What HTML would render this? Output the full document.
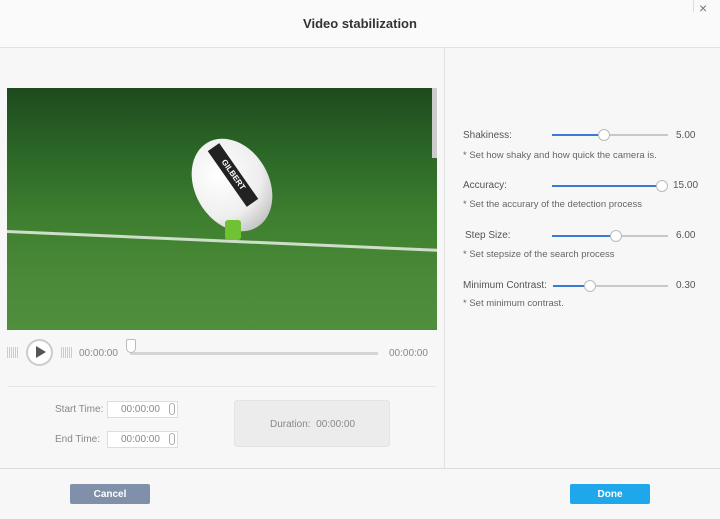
<!DOCTYPE html><html><head><style>
*{margin:0;padding:0;box-sizing:border-box}
body{width:720px;height:519px;background:#f7f7f7;font-family:"Liberation Sans",sans-serif;position:relative;overflow:hidden;color:#555}
.a{position:absolute}
.t{font-size:10px;color:#555}
.s{font-size:9.5px;color:#666}
.tr{position:absolute;height:2px;background:#c8c8c8;width:116px;left:552px}
.fl{position:absolute;height:2px;background:#3a7bd5;left:552px}
.kn{position:absolute;width:12px;height:12px;border-radius:50%;background:#fff;border:1px solid #bbb}
</style></head><body>
<div class="a" style="left:0;top:0;width:720px;height:48px;background:#fafafa;border-bottom:1px solid #e2e2e2"></div>
<div class="a" style="left:0;top:16px;width:720px;text-align:center;font-size:13px;font-weight:bold;color:#333">Video stabilization</div>
<div class="a" style="left:699px;top:0;font-size:14px;color:#777">×</div>
<div class="a" style="left:693px;top:0;width:1px;height:12px;background:#ddd"></div>
<div class="a" style="left:444px;top:48px;width:1px;height:420px;background:#e2e2e2"></div>
<div class="a" style="left:0;top:468px;width:720px;height:1px;background:#ddd"></div>
<div class="a" style="left:7px;top:88px;width:430px;height:242px;overflow:hidden;background:linear-gradient(180deg,#1e4a1e 0%,#2d6a28 30%,#3f8030 55%,#4a8a38 80%,#4f8e3c 100%)">
<div class="a" style="left:0;top:142px;width:440px;height:3px;background:#dfe8dc;transform:rotate(2.5deg);transform-origin:0 0;opacity:.9"></div>
<div class="a" style="left:188px;top:48px;width:74px;height:98px;border-radius:50%;background:radial-gradient(circle at 40% 35%,#fff 0%,#eee 55%,#aaa 100%);transform:rotate(-30deg)"></div>
<div class="a" style="left:192px;top:80px;width:68px;height:14px;background:#222;transform:rotate(55deg);font-size:8px;color:#fff;font-weight:bold;text-align:center;line-height:14px">GILBERT</div>
<div class="a" style="left:218px;top:132px;width:16px;height:20px;background:#6fc234;border-radius:3px"></div>
<div class="a" style="left:425px;top:0;width:5px;height:70px;background:#ccc"></div>
</div>
<div class="a" style="left:7px;top:347px;width:11px;height:11px;background:repeating-linear-gradient(90deg,#ccc 0 1px,transparent 1px 2px)"></div>
<div class="a" style="left:26px;top:339px;width:27px;height:27px;border-radius:50%;background:#fff;border:2px solid #ccc"></div>
<div class="a" style="left:36px;top:346px;width:0;height:0;border-left:10px solid #555;border-top:6px solid transparent;border-bottom:6px solid transparent"></div>
<div class="a" style="left:61px;top:347px;width:11px;height:11px;background:repeating-linear-gradient(90deg,#ccc 0 1px,transparent 1px 2px)"></div>
<div class="a t" style="left:79px;top:348px;color:#888">00:00:00</div>
<div class="a" style="left:130px;top:352px;width:248px;height:3px;background:#d5d5d5"></div>
<div class="a" style="left:126px;top:339px;width:10px;height:14px;background:#fff;border:1px solid #bbb;border-radius:2px 2px 5px 5px"></div>
<div class="a t" style="left:389px;top:348px;color:#888">00:00:00</div>
<div class="a" style="left:8px;top:386px;width:428px;height:1px;background:#e4e4e4"></div>
<div class="a t" style="left:55px;top:404px;color:#888">Start Time:</div>
<div class="a t" style="left:55px;top:434px;color:#888">End Time:</div>
<div class="a" style="left:107px;top:401px;width:71px;height:17px;background:#fff;border:1px solid #ddd"></div>
<div class="a" style="left:107px;top:431px;width:71px;height:17px;background:#fff;border:1px solid #ddd"></div>
<div class="a t" style="left:121px;top:404px;color:#888">00:00:00</div>
<div class="a t" style="left:121px;top:434px;color:#888">00:00:00</div>
<div class="a" style="left:169px;top:403px;width:6px;height:12px;border:1px solid #aaa;border-radius:3px"></div>
<div class="a" style="left:169px;top:433px;width:6px;height:12px;border:1px solid #aaa;border-radius:3px"></div>
<div class="a" style="left:234px;top:400px;width:156px;height:47px;background:#ececec;border:1px solid #e4e4e4;border-radius:3px"></div>
<div class="a t" style="left:270px;top:419px;color:#888">Duration:&nbsp; 00:00:00</div>
<div class="a" style="left:70px;top:484px;width:80px;height:20px;background:#8090ab;border-radius:2px;color:#fff;font-size:10px;font-weight:bold;text-align:center;padding-top:5px">Cancel</div>
<div class="a" style="left:570px;top:484px;width:80px;height:20px;background:#1ea7ea;border-radius:2px;color:#fff;font-size:10px;font-weight:bold;text-align:center;padding-top:5px">Done</div>

<div class="a t" style="left:463px;top:130px">Shakiness:</div>
<div class="tr" style="top:134px"></div><div class="fl" style="top:134px;width:52px"></div><div class="kn" style="left:598px;top:129px"></div>
<div class="a t" style="left:676px;top:130px">5.00</div>
<div class="a s" style="left:463px;top:150px">* Set how shaky and how quick the camera is.</div>

<div class="a t" style="left:463px;top:180px">Accuracy:</div>
<div class="tr" style="top:185px"></div><div class="fl" style="top:185px;width:110px"></div><div class="kn" style="left:656px;top:180px"></div>
<div class="a t" style="left:673px;top:180px">15.00</div>
<div class="a s" style="left:463px;top:199px">* Set the accurary of the detection process</div>

<div class="a t" style="left:465px;top:230px">Step Size:</div>
<div class="tr" style="top:235px"></div><div class="fl" style="top:235px;width:64px"></div><div class="kn" style="left:610px;top:230px"></div>
<div class="a t" style="left:676px;top:230px">6.00</div>
<div class="a s" style="left:463px;top:249px">* Set stepsize of the search process</div>

<div class="a t" style="left:463px;top:280px">Minimum Contrast:</div>
<div class="tr" style="top:285px;left:553px;width:115px"></div><div class="fl" style="top:285px;width:35px;left:553px"></div><div class="kn" style="left:584px;top:280px"></div>
<div class="a t" style="left:676px;top:280px">0.30</div>
<div class="a s" style="left:463px;top:298px">* Set minimum contrast.</div>
</body></html>
